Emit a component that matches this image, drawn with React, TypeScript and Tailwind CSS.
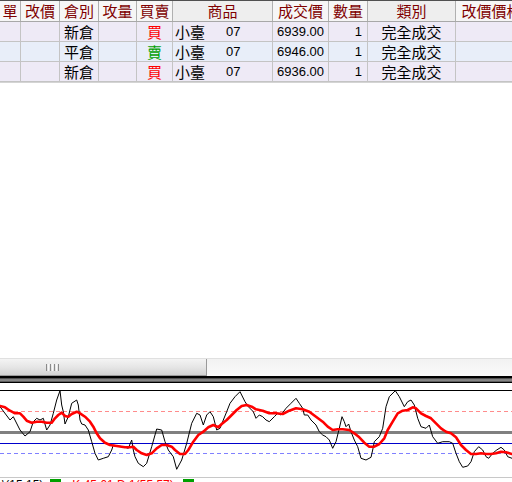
import React from "react";

const widths = ["w-[21px]", "w-[39px]", "w-[39px]", "w-[38px]", "w-[36px]", "w-[100px]", "w-[56px]", "w-[39px]", "w-[88px]", "w-[72px]"];
const headers = ["單", "改價", "倉別", "攻量", "買賣", "商品", "成交價", "數量", "類別", "改價價格"];
const rows = [
  { open: "新倉", side: "買", price: "6939.00", bg: "bg-[#eeeaf6]" },
  { open: "平倉", side: "賣", price: "6946.00", bg: "bg-[#e8eef9]" },
  { open: "新倉", side: "買", price: "6936.00", bg: "bg-[#eeeaf6]" },
];

const cjk = "font-['Noto_Sans_CJK_TC','Noto_Sans_CJK_SC',sans-serif]";
const num = "font-['Liberation_Sans',Arial,sans-serif]";

const kPts: [number, number][] = [
  [0, 406.7], [10, 420], [13.3, 416.7], [20, 430], [25, 436], [30, 431.7], [33.3, 421.7], [36.7, 418.3], [40, 420], [43.3, 418.3], [46.7, 430], [50, 425], [53.3, 413.3], [56.7, 400], [60, 390.7], [61.7, 405], [63.3, 411.7], [65, 424], [68.3, 416.7], [71.7, 403.3], [76.7, 400], [78.3, 405], [80, 420], [81.7, 424], [85, 425], [88.3, 430], [91.7, 441.7], [95, 453.3], [98.3, 460], [103.3, 458.3], [108.3, 456.7], [111.7, 450], [113.3, 445], [116.7, 446], [123.3, 446.7], [128.3, 448.3], [131.7, 440], [133.3, 450], [135, 456.7], [138.3, 463.3], [143.3, 466.7], [146.7, 463.3], [151.7, 446.7], [156.7, 429], [161.7, 430], [165, 441.7], [168.3, 450], [173.3, 456.7], [176.7, 469.3], [181.7, 460], [186.7, 443.3], [191.7, 423.3], [196.7, 413.3], [200, 415], [203.3, 425], [206.7, 415], [210, 411.7], [213.3, 416.7], [216.7, 430], [220, 428.3], [223.3, 420], [226.7, 411.7], [230, 403.3], [235, 396.7], [240, 391.7], [245, 401.7], [248.3, 406.7], [253.3, 411.7], [256, 418.3], [259.3, 415], [262.7, 416.7], [266, 420], [269.3, 421.7], [274.3, 416.7], [277.7, 413.3], [281, 415], [286, 408.3], [291, 403.3], [296, 398.3], [299.3, 403.3], [302.7, 408.3], [304.3, 415], [307.7, 415], [311, 420], [316, 425], [319.3, 431.7], [322.7, 435], [326, 436.7], [329.3, 440], [332.7, 448.3], [336, 441.7], [339.3, 428.3], [342, 416.7], [344.3, 421.7], [346, 426.7], [348.7, 424], [351, 431.7], [354.3, 440], [357.7, 446.7], [361, 458.3], [366, 460], [371, 457.3], [372.7, 450], [374.3, 441.7], [379.3, 436.7], [382.7, 428.3], [386, 406.7], [389.3, 396.7], [395.3, 390.7], [399.3, 396.7], [404.3, 406.7], [407.7, 401.7], [411, 400], [414.3, 405], [417.7, 418.3], [421, 426.7], [426, 428.3], [429.3, 425], [432.7, 436.7], [437.7, 443.3], [442.7, 441.7], [449.3, 441.7], [452.7, 443.3], [456, 453.3], [459.3, 461.7], [462.7, 467.3], [467.7, 466], [471, 461.7], [474.3, 451.7], [478.7, 446.7], [482.7, 450], [486, 456.7], [488.7, 458.3], [492.7, 453.3], [496.7, 450], [501, 447.3], [504.3, 450], [507.7, 456.7], [512, 458.3],
];

const dPts: [number, number][] = [
  [0, 406], [5, 407.3], [10, 410.7], [15, 413.3], [20, 413.3], [23.3, 416.7], [26.7, 420.7], [31.7, 422.7], [36.7, 421.7], [41.7, 421.7], [46.7, 422.7], [51.7, 422.7], [55, 418.3], [58.3, 415], [61.7, 412.7], [65, 416], [68.3, 416.7], [71.7, 414], [76.7, 411.7], [80, 413.3], [85, 416.7], [90, 421.7], [93.3, 426.7], [96.7, 433.3], [100, 438.3], [105, 442.7], [110, 445], [116.7, 446], [125, 447.3], [130, 447.3], [133.3, 446.7], [136.7, 450], [141.7, 453.3], [146.7, 455], [151.7, 453.3], [156.7, 448.3], [161.7, 445], [166.7, 445], [171.7, 446.7], [175, 450], [180, 454], [185, 454], [188.3, 450], [193.3, 441.7], [198.3, 435], [203.3, 431.7], [208.3, 427.3], [213.3, 425], [218.3, 427.3], [221.7, 424], [226.7, 420], [231.7, 415], [236.7, 410], [241.7, 406], [246.7, 405], [251.7, 406.7], [256, 409.3], [262.7, 410.7], [269.3, 413.3], [276, 413.3], [282.7, 414], [289.3, 410.7], [296, 408.3], [302.7, 409.3], [309.3, 411.7], [316, 416.7], [322.7, 421.7], [327.7, 426.7], [332.7, 430], [337.7, 429.3], [342.7, 429.3], [349.3, 430], [354.3, 433.3], [359.3, 437.3], [364.3, 442.7], [369.3, 446.7], [374.3, 446.7], [379.3, 444], [384.3, 438.3], [387.7, 430], [392.7, 421.7], [397.7, 413.3], [402.7, 410.7], [407.7, 410], [412.7, 407.3], [416, 408.3], [421, 413.3], [426, 416], [431, 418.3], [436, 423.3], [441, 428.3], [446, 431.7], [451, 433.3], [456, 437.3], [461, 445], [466, 450], [471, 454], [476, 454], [481, 453.3], [486, 454], [491, 454], [496, 453.3], [501, 451.7], [506, 452.3], [512, 454],
];

const toStr = (p: [number, number][]) => p.map(([x, y]) => `${x},${y}`).join(" ");

function Cell({ i, className = "", children }: { i: number; className?: string; children?: React.ReactNode }) {
  return (
    <div className={`${widths[i]} shrink-0 h-full border-r border-[#c4c4c4] flex items-center overflow-hidden whitespace-nowrap ${className}`}>
      {children}
    </div>
  );
}

export default function App() {
  return (
    <div className="w-[512px] h-[482px] overflow-hidden bg-white flex flex-col text-black">
      {/* table */}
      <div className="h-[83px] shrink-0 flex flex-col">
        <div className="h-[22px] flex border-t border-[#505050] border-b border-b-[#a8a8a8] bg-[#f6f6f6]">
          {headers.map((h, i) => (
            <div
              key={i}
              className={`${widths[i]} shrink-0 h-full border-r border-[#b0b0b0] flex items-center justify-center overflow-hidden whitespace-nowrap text-[15px] leading-[20px] text-[#800000] ${cjk} ${i === 5 || i === 8 ? "bg-[#eeeeee]" : ""}`}
            >
              {h}
            </div>
          ))}
        </div>
        {rows.map((r, ri) => (
          <div key={ri} className={`h-[20px] flex border-b border-[#c4c4c4] ${r.bg} text-[15px] leading-[19px] ${cjk}`}>
            <Cell i={0} />
            <Cell i={1} />
            <Cell i={2} className="justify-center">{r.open}</Cell>
            <Cell i={3} />
            <Cell i={4} className={`justify-center ${r.side === "買" ? "text-[#ff0000]" : "text-[#00a000]"}`}>{r.side}</Cell>
            <Cell i={5} className="pl-[2px]">
              <span>小臺</span>
              <span className={`${num} text-[13px] ml-[21px]`}>07</span>
            </Cell>
            <Cell i={6} className={`justify-end pr-[4px] ${num} text-[13px]`}>{r.price}</Cell>
            <Cell i={7} className={`justify-end pr-[5px] ${num} text-[13px]`}>1</Cell>
            <Cell i={8} className="justify-center">完全成交</Cell>
            <Cell i={9} />
          </div>
        ))}
        <div className="h-[1px] bg-[#d4d4d4]" />
      </div>

      {/* empty area */}
      <div className="h-[275px] shrink-0 bg-white" />

      {/* scrollbar */}
      <div className="h-[18px] shrink-0 flex bg-gradient-to-b from-[#f2f2f2] to-[#fafafa] border-t border-[#e0e0e0]">
        <div className="w-[207px] h-full shrink-0 border-r border-b border-[#9a9a9a] bg-gradient-to-b from-[#f4f4f4] via-[#e6e6e6] to-[#d2d2d2] flex items-center pl-[46px] gap-[1px]">
          <div className="w-[1px] h-[7px] bg-[#8a8a8a]" />
          <div className="w-[1px] h-[7px] bg-[#f8f8f8]" />
          <div className="w-[1px] h-[7px] bg-[#8a8a8a]" />
          <div className="w-[1px] h-[7px] bg-[#f8f8f8]" />
          <div className="w-[1px] h-[7px] bg-[#8a8a8a]" />
          <div className="w-[1px] h-[7px] bg-[#f8f8f8]" />
          <div className="w-[1px] h-[7px] bg-[#8a8a8a]" />
        </div>
        <div className="flex-1" />
      </div>

      {/* splitter */}
      <div className="h-[7px] shrink-0 flex flex-col">
        <div className="h-[2px] bg-black" />
        <div className="h-[4px] bg-gradient-to-b from-[#3a3a3a] via-[#9a9a9a] to-[#4a4a4a]" />
        <div className="h-[1px] bg-black" />
      </div>

      {/* chart */}
      <svg width="512" height="95" viewBox="0 383 512 95" className="shrink-0 block" shapeRendering="auto">
        <rect x="0" y="390" width="512" height="1" fill="#000" />
        <line x1="0" y1="411.5" x2="512" y2="411.5" stroke="#ff8c8c" strokeWidth="1" strokeDasharray="4 3" />
        <rect x="0" y="431" width="512" height="3" fill="#808080" />
        <rect x="0" y="443" width="512" height="1" fill="#0000cc" />
        <line x1="0" y1="453.5" x2="512" y2="453.5" stroke="#8080ff" strokeWidth="1" strokeDasharray="4 3" />
        <rect x="0" y="477" width="512" height="1" fill="#c8c8c8" />
        <polyline points={toStr(kPts)} fill="none" stroke="#000" strokeWidth="1" strokeLinejoin="round" />
        <polyline points={toStr(dPts)} fill="none" stroke="#ff0000" strokeWidth="2.6" strokeLinejoin="round" strokeLinecap="round" />
      </svg>

      {/* legend (mostly cut off) */}
      <div className={`h-[12px] shrink-0 flex items-start pl-[2px] gap-[3px] text-[12px] leading-[12px] ${num} -mb-[8px]`}>
        <span className="text-black mt-[1px]">\(15,15)</span>
        <span className="w-[11px] h-[8px] mt-[1px] bg-[#00a000] ml-[4px]" />
        <span className="text-[#ff0000] mt-[1px] ml-[8px]">K 45.01 D 1(55.57)</span>
        <span className="w-[11px] h-[8px] mt-[1px] bg-[#00a000] ml-[6px]" />
      </div>
    </div>
  );
}
